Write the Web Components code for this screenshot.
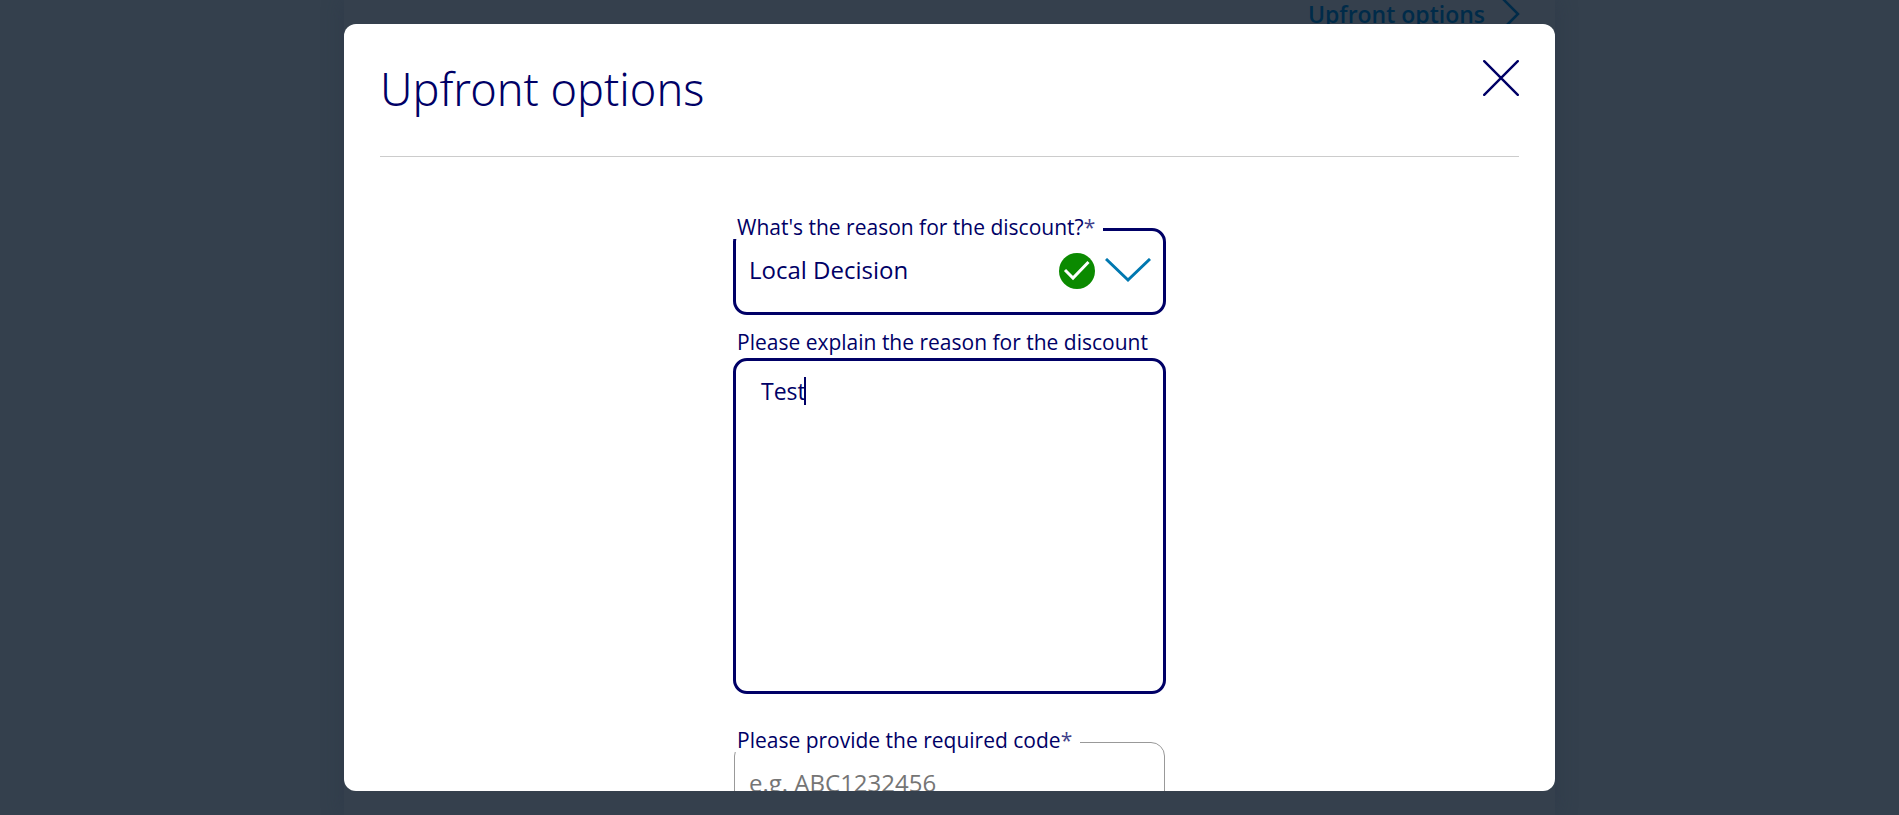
<!DOCTYPE html>
<html lang="en">
<head>
<meta charset="utf-8">
<meta name="viewport" content="width=device-width, initial-scale=1">
<title>Upfront options</title>
<style>
  html, body { height: 100%; margin: 0; }
  body {
    font-family: "Open Sans", "Noto Sans", sans-serif;
    color: #000066;
    background: #34404d;
    overflow: hidden;
  }
</style>
</head>
<body>
<page-backdrop>
  <options-link href="#options">Upfront options</options-link>
</page-backdrop>
<modal-dialog heading="Upfront options">
  <select-field label="What's the reason for the discount?" required value="Local Decision"></select-field>
  <textarea-field label="Please explain the reason for the discount" value="Test"></textarea-field>
  <code-field label="Please provide the required code" required placeholder="e.g. ABC1232456"></code-field>
</modal-dialog>

<script>
class PageBackdrop extends HTMLElement {
  constructor() {
    super();
    this.attachShadow({ mode: "open" }).innerHTML = `
      <style>
        :host { position: fixed; inset: 0; display: flex; justify-content: center; background: #34404d; }
        .column {
          box-sizing: border-box; width: 1211px; max-width: 100%;
          padding: 0 36px; display: flex; justify-content: flex-end; align-items: flex-start;
          box-shadow: 0 0 20px rgba(40, 50, 70, .4);
          background: #35404d;
        }
      </style>
      <div class="column"><slot></slot></div>`;
  }
}
customElements.define("page-backdrop", PageBackdrop);

class OptionsLink extends HTMLElement {
  constructor() {
    super();
    this.attachShadow({ mode: "open" }).innerHTML = `
      <style>
        :host { display: block; }
        a { display: flex; align-items: center; gap: 16px; color: #002b49; text-decoration: none;
            font-size: 23px; font-weight: 650; line-height: 28px; }
        svg { display: block; width: 18px; height: 28px; overflow: visible; }
      </style>
      <a><slot></slot>
        <svg viewBox="0 0 18 28" fill="none" stroke="currentColor" stroke-width="2.5" aria-hidden="true"><path d="M1 -2 17 14 1 30"/></svg>
      </a>`;
    this.shadowRoot.querySelector("a").href = this.getAttribute("href") || "#";
  }
}
customElements.define("options-link", OptionsLink);

class ModalDialog extends HTMLElement {
  constructor() {
    super();
    this.attachShadow({ mode: "open" }).innerHTML = `
      <style>
        :host { position: fixed; inset: 0; display: flex; justify-content: center; box-sizing: border-box; padding: 24px 0; }
        section { box-sizing: border-box; width: 1211px; max-width: 100%; padding: 0 36px;
                  background: #fff; border-radius: 12px; overflow: hidden; }
        header { display: flex; justify-content: space-between; align-items: flex-start;
                 box-sizing: border-box; padding: 36px 0 38px; border-bottom: 1px solid #ccc; }
        h1 { margin: 0; font-family: "Noto Sans", "Open Sans", sans-serif; font-size: 45px; font-weight: 300; line-height: 58px; }
        button { display: block; padding: 0; border: 0; background: none; color: inherit; cursor: pointer; }
        svg { display: block; width: 36px; height: 36px; }
        form { display: flex; flex-direction: column; width: 433px; max-width: 100%; margin: 0 auto; padding: 71px 0 36px; }
      </style>
      <section role="dialog" aria-modal="true" aria-labelledby="title">
        <header>
          <h1 id="title"></h1>
          <button type="button" aria-label="Close">
            <svg viewBox="0 0 36 36" fill="none" stroke="currentColor" stroke-width="2.4" stroke-linecap="round" aria-hidden="true"><path d="M1.2 1.2 34.8 34.8M34.8 1.2 1.2 34.8"/></svg>
          </button>
        </header>
        <form><slot></slot></form>
      </section>`;
    this.shadowRoot.querySelector("h1").textContent = this.getAttribute("heading");
  }
}
customElements.define("modal-dialog", ModalDialog);

const labelStyles = `
  label { font-size: 21px; line-height: 24px; color: #000066; white-space: nowrap; }
  label .star { opacity: .75; }
  .notched { position: absolute; left: 0; top: -13px; padding: 0 8px 0 4px; background: #fff; }`;

function fillLabel(host) {
  const label = host.shadowRoot.querySelector("label");
  label.textContent = host.getAttribute("label");
  if (host.hasAttribute("required")) {
    const star = document.createElement("span");
    star.className = "star";
    star.textContent = "*";
    label.append(star);
  }
}

class SelectField extends HTMLElement {
  constructor() {
    super();
    this.attachShadow({ mode: "open" }).innerHTML = `
      <style>
        :host { display: block; position: relative; }
        ${labelStyles}
        select { appearance: none; display: block; box-sizing: border-box; width: 100%; height: 87px; margin: 0;
                 padding: 0 100px 4px 13px; border: 3px solid #000066; border-radius: 14px; outline: 0;
                 background: #fff; color: #000066; font: 24px/32px "Open Sans", "Noto Sans", sans-serif; }
        .icons { position: absolute; right: 15px; top: 25px; display: flex; align-items: center; gap: 10px; pointer-events: none; }
        svg { display: block; }
      </style>
      <select id="field"><option></option></select>
      <label for="field" class="notched"></label>
      <span class="icons" aria-hidden="true">
        <svg width="36" height="36" viewBox="0 0 36 36" fill="none"><circle cx="18" cy="18" r="18" fill="#0b8a00"/><path d="M6 17 14 25 29.500 9" stroke="#fff" stroke-width="3"/></svg>
        <svg width="46" height="26" viewBox="0 0 46 26" fill="none" stroke="#0078b0" stroke-width="3"><path d="M1 1 23 22 45 1"/></svg>
      </span>`;
    this.shadowRoot.querySelector("option").textContent = this.getAttribute("value");
    fillLabel(this);
  }
}
customElements.define("select-field", SelectField);

class TextareaField extends HTMLElement {
  constructor() {
    super();
    this.attachShadow({ mode: "open" }).innerHTML = `
      <style>
        :host { display: flex; flex-direction: column; gap: 4px; position: relative; margin-top: 15px; }
        ${labelStyles}
        label { padding-left: 4px; }
        textarea { display: block; box-sizing: border-box; width: 100%; height: 336px; margin: 0; resize: none;
                   padding: 14px 25px; border: 3px solid #000066; border-radius: 14px; outline: 0;
                   background: #fff; color: #000066; font: 23px/32px "Open Sans", "Noto Sans", sans-serif; }
        .caret { position: absolute; left: 71px; top: 47px; width: 2px; height: 28px; background: #000066; }
      </style>
      <label for="field"></label>
      <textarea id="field"></textarea>
      <span class="caret" aria-hidden="true"></span>`;
    this.shadowRoot.querySelector("textarea").value = this.getAttribute("value");
    fillLabel(this);
  }
}
customElements.define("textarea-field", TextareaField);

class CodeField extends HTMLElement {
  constructor() {
    super();
    this.attachShadow({ mode: "open" }).innerHTML = `
      <style>
        :host { display: block; position: relative; margin-top: 47px; }
        ${labelStyles}
        .box { padding: 1px 1px 0; }
        input { display: block; box-sizing: border-box; width: 100%; height: 85px; margin: 0;
                padding: 0 14px 4px; border: 1px solid #999; border-radius: 14px; outline: 0;
                background: #fff; color: #000066; font: 24px/32px "Open Sans", "Noto Sans", sans-serif; }
        input::placeholder { color: #757575; opacity: 1; }
      </style>
      <div class="box"><input id="field" type="text"></div>
      <label for="field" class="notched"></label>`;
    this.shadowRoot.querySelector("input").placeholder = this.getAttribute("placeholder");
    fillLabel(this);
  }
}
customElements.define("code-field", CodeField);
</script>
</body>
</html>
